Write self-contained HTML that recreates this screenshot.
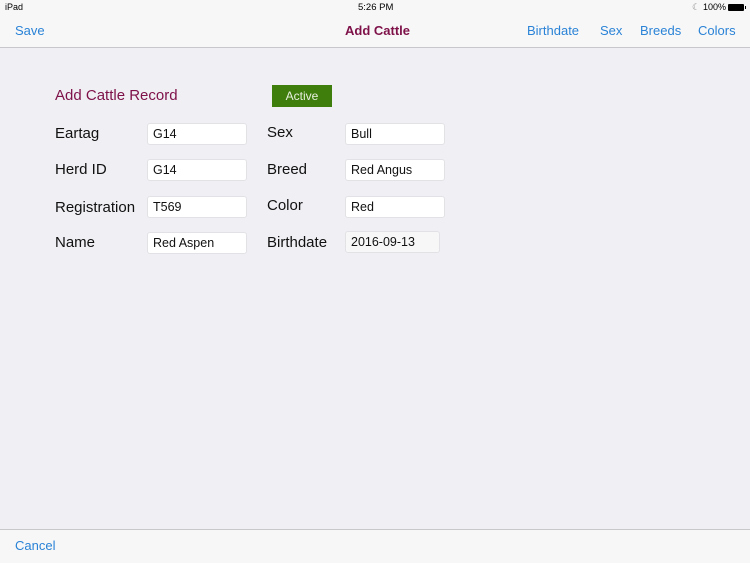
<!DOCTYPE html>
<html><head><style>
body{margin:0;width:750px;height:562px;overflow:hidden;background:#efeff4;font-family:"Liberation Sans",sans-serif;position:relative}
.a{position:absolute;white-space:nowrap}
.nav{position:absolute;left:0;top:0;width:750px;height:47px;background:#f7f7f8;border-bottom:1px solid #c8c7cc}
.bl{color:#2a83d6;font-size:13px}
.lb{font-size:15px;color:#111}
.f{position:absolute;background:#fff;border-radius:3px;border:1px solid #e2e2e6;box-sizing:border-box;font-size:12.5px;padding-left:5px;line-height:20px;color:#111}
.bot{position:absolute;left:0;top:529px;width:750px;height:33px;background:#f7f7f8;border-top:1px solid #c8c7cc}
</style></head><body>
<div class="nav"></div>
<div class="a" style="left:5px;top:2px;font-size:9px">iPad</div>
<div class="a" style="left:358px;top:2px;font-size:9.5px">5:26 PM</div>
<div class="a" style="left:692px;top:2px;font-size:9px;color:#888">☾</div>
<div class="a" style="left:703px;top:2px;font-size:9px">100%</div>
<div class="a" style="left:728px;top:4px;width:16px;height:7px;background:#000;border-radius:1px"></div>
<div class="a" style="left:745px;top:6px;width:1px;height:3px;background:#000"></div>
<div class="a bl" style="left:15px;top:23px">Save</div>
<div class="a" style="left:345px;top:23px;font-size:13px;font-weight:bold;color:#7e1148">Add Cattle</div>
<div class="a bl" style="left:527px;top:23px">Birthdate</div>
<div class="a bl" style="left:600px;top:23px">Sex</div>
<div class="a bl" style="left:640px;top:23px">Breeds</div>
<div class="a bl" style="left:698px;top:23px">Colors</div>
<div class="a" style="left:55px;top:87px;font-size:15px;color:#7e1148">Add Cattle Record</div>
<div class="a" style="left:272px;top:85px;width:60px;height:22px;background:#3f7d0c;color:#e8f0e0;font-size:12px;text-align:center;line-height:22px">Active</div>
<div class="a lb" style="left:55px;top:125px">Eartag</div>
<div class="a lb" style="left:55px;top:161px">Herd ID</div>
<div class="a lb" style="left:55px;top:199px">Registration</div>
<div class="a lb" style="left:55px;top:234px">Name</div>
<div class="a lb" style="left:267px;top:124px">Sex</div>
<div class="a lb" style="left:267px;top:161px">Breed</div>
<div class="a lb" style="left:267px;top:197px">Color</div>
<div class="a lb" style="left:267px;top:234px">Birthdate</div>
<div class="f" style="left:147px;top:123px;width:100px;height:22px">G14</div>
<div class="f" style="left:147px;top:159px;width:100px;height:22px">G14</div>
<div class="f" style="left:147px;top:196px;width:100px;height:22px">T569</div>
<div class="f" style="left:147px;top:232px;width:100px;height:22px">Red Aspen</div>
<div class="f" style="left:345px;top:123px;width:100px;height:22px">Bull</div>
<div class="f" style="left:345px;top:159px;width:100px;height:22px">Red Angus</div>
<div class="f" style="left:345px;top:196px;width:100px;height:22px">Red</div>
<div class="f" style="left:345px;top:231px;width:95px;height:22px;background:#f7f7f8">2016-09-13</div>
<div class="bot"></div>
<div class="a bl" style="left:15px;top:538px">Cancel</div>
</body></html>
